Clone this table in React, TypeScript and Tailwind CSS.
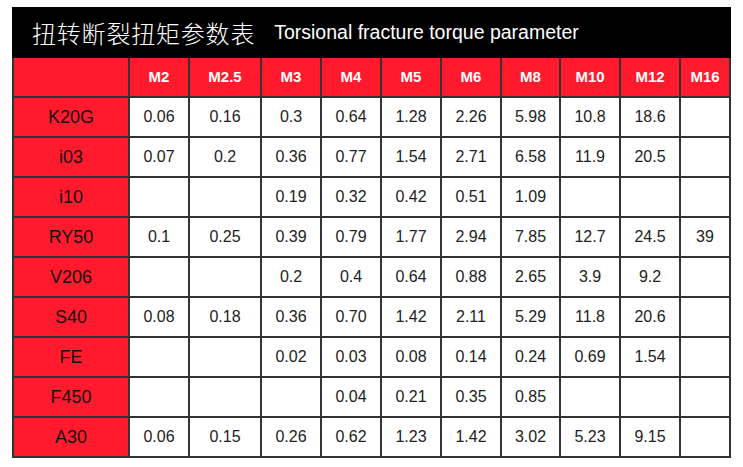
import React from "react";

const cols = ["M2", "M2.5", "M3", "M4", "M5", "M6", "M8", "M10", "M12", "M16"];
const rows: [string, string[]][] = [
  ["K20G", ["0.06", "0.16", "0.3", "0.64", "1.28", "2.26", "5.98", "10.8", "18.6", ""]],
  ["i03", ["0.07", "0.2", "0.36", "0.77", "1.54", "2.71", "6.58", "11.9", "20.5", ""]],
  ["i10", ["", "", "0.19", "0.32", "0.42", "0.51", "1.09", "", "", ""]],
  ["RY50", ["0.1", "0.25", "0.39", "0.79", "1.77", "2.94", "7.85", "12.7", "24.5", "39"]],
  ["V206", ["", "", "0.2", "0.4", "0.64", "0.88", "2.65", "3.9", "9.2", ""]],
  ["S40", ["0.08", "0.18", "0.36", "0.70", "1.42", "2.11", "5.29", "11.8", "20.6", ""]],
  ["FE", ["", "", "0.02", "0.03", "0.08", "0.14", "0.24", "0.69", "1.54", ""]],
  ["F450", ["", "", "", "0.04", "0.21", "0.35", "0.85", "", "", ""]],
  ["A30", ["0.06", "0.15", "0.26", "0.62", "1.23", "1.42", "3.02", "5.23", "9.15", ""]],
];

export default function App() {
  return (
    <div className="w-[743px] h-[467px] bg-white pl-[12px] pt-[7px]" style={{ fontFamily: '"Liberation Sans", Arial, sans-serif' }}>
      <div className="w-[719px]">
        <div className="h-[51px] bg-black flex items-center pl-[20px] text-white">
          <span className="text-[24px] tracking-[0.8px]" style={{ fontFamily: '"Noto Sans CJK SC", sans-serif', fontWeight: 300 }}>
            扭转断裂扭矩参数表
          </span>
          <span className="text-[19.5px] ml-[19px]">Torsional fracture torque parameter</span>
        </div>
        <div className="grid grid-cols-[114px_58px_70px_58px_58px_58px_58px_57px_58px_58px_48px] auto-rows-[38px] gap-[2px] bg-[#333] px-[2px] pb-[2px]">
          <div className="bg-[#ff1b2d]" />
          {cols.map((c) => (
            <div key={c} className="bg-[#ff1b2d] text-white font-bold text-[15px] flex items-center justify-center">
              {c}
            </div>
          ))}
          {rows.map(([name, vals]) => (
            <React.Fragment key={name}>
              <div className="bg-[#ff1b2d] text-[#111] text-[18px] flex items-center justify-center">{name}</div>
              {vals.map((v, i) => (
                <div key={i} className="bg-white text-[#222] text-[16px] flex items-center justify-center">
                  {v}
                </div>
              ))}
            </React.Fragment>
          ))}
        </div>
      </div>
    </div>
  );
}
